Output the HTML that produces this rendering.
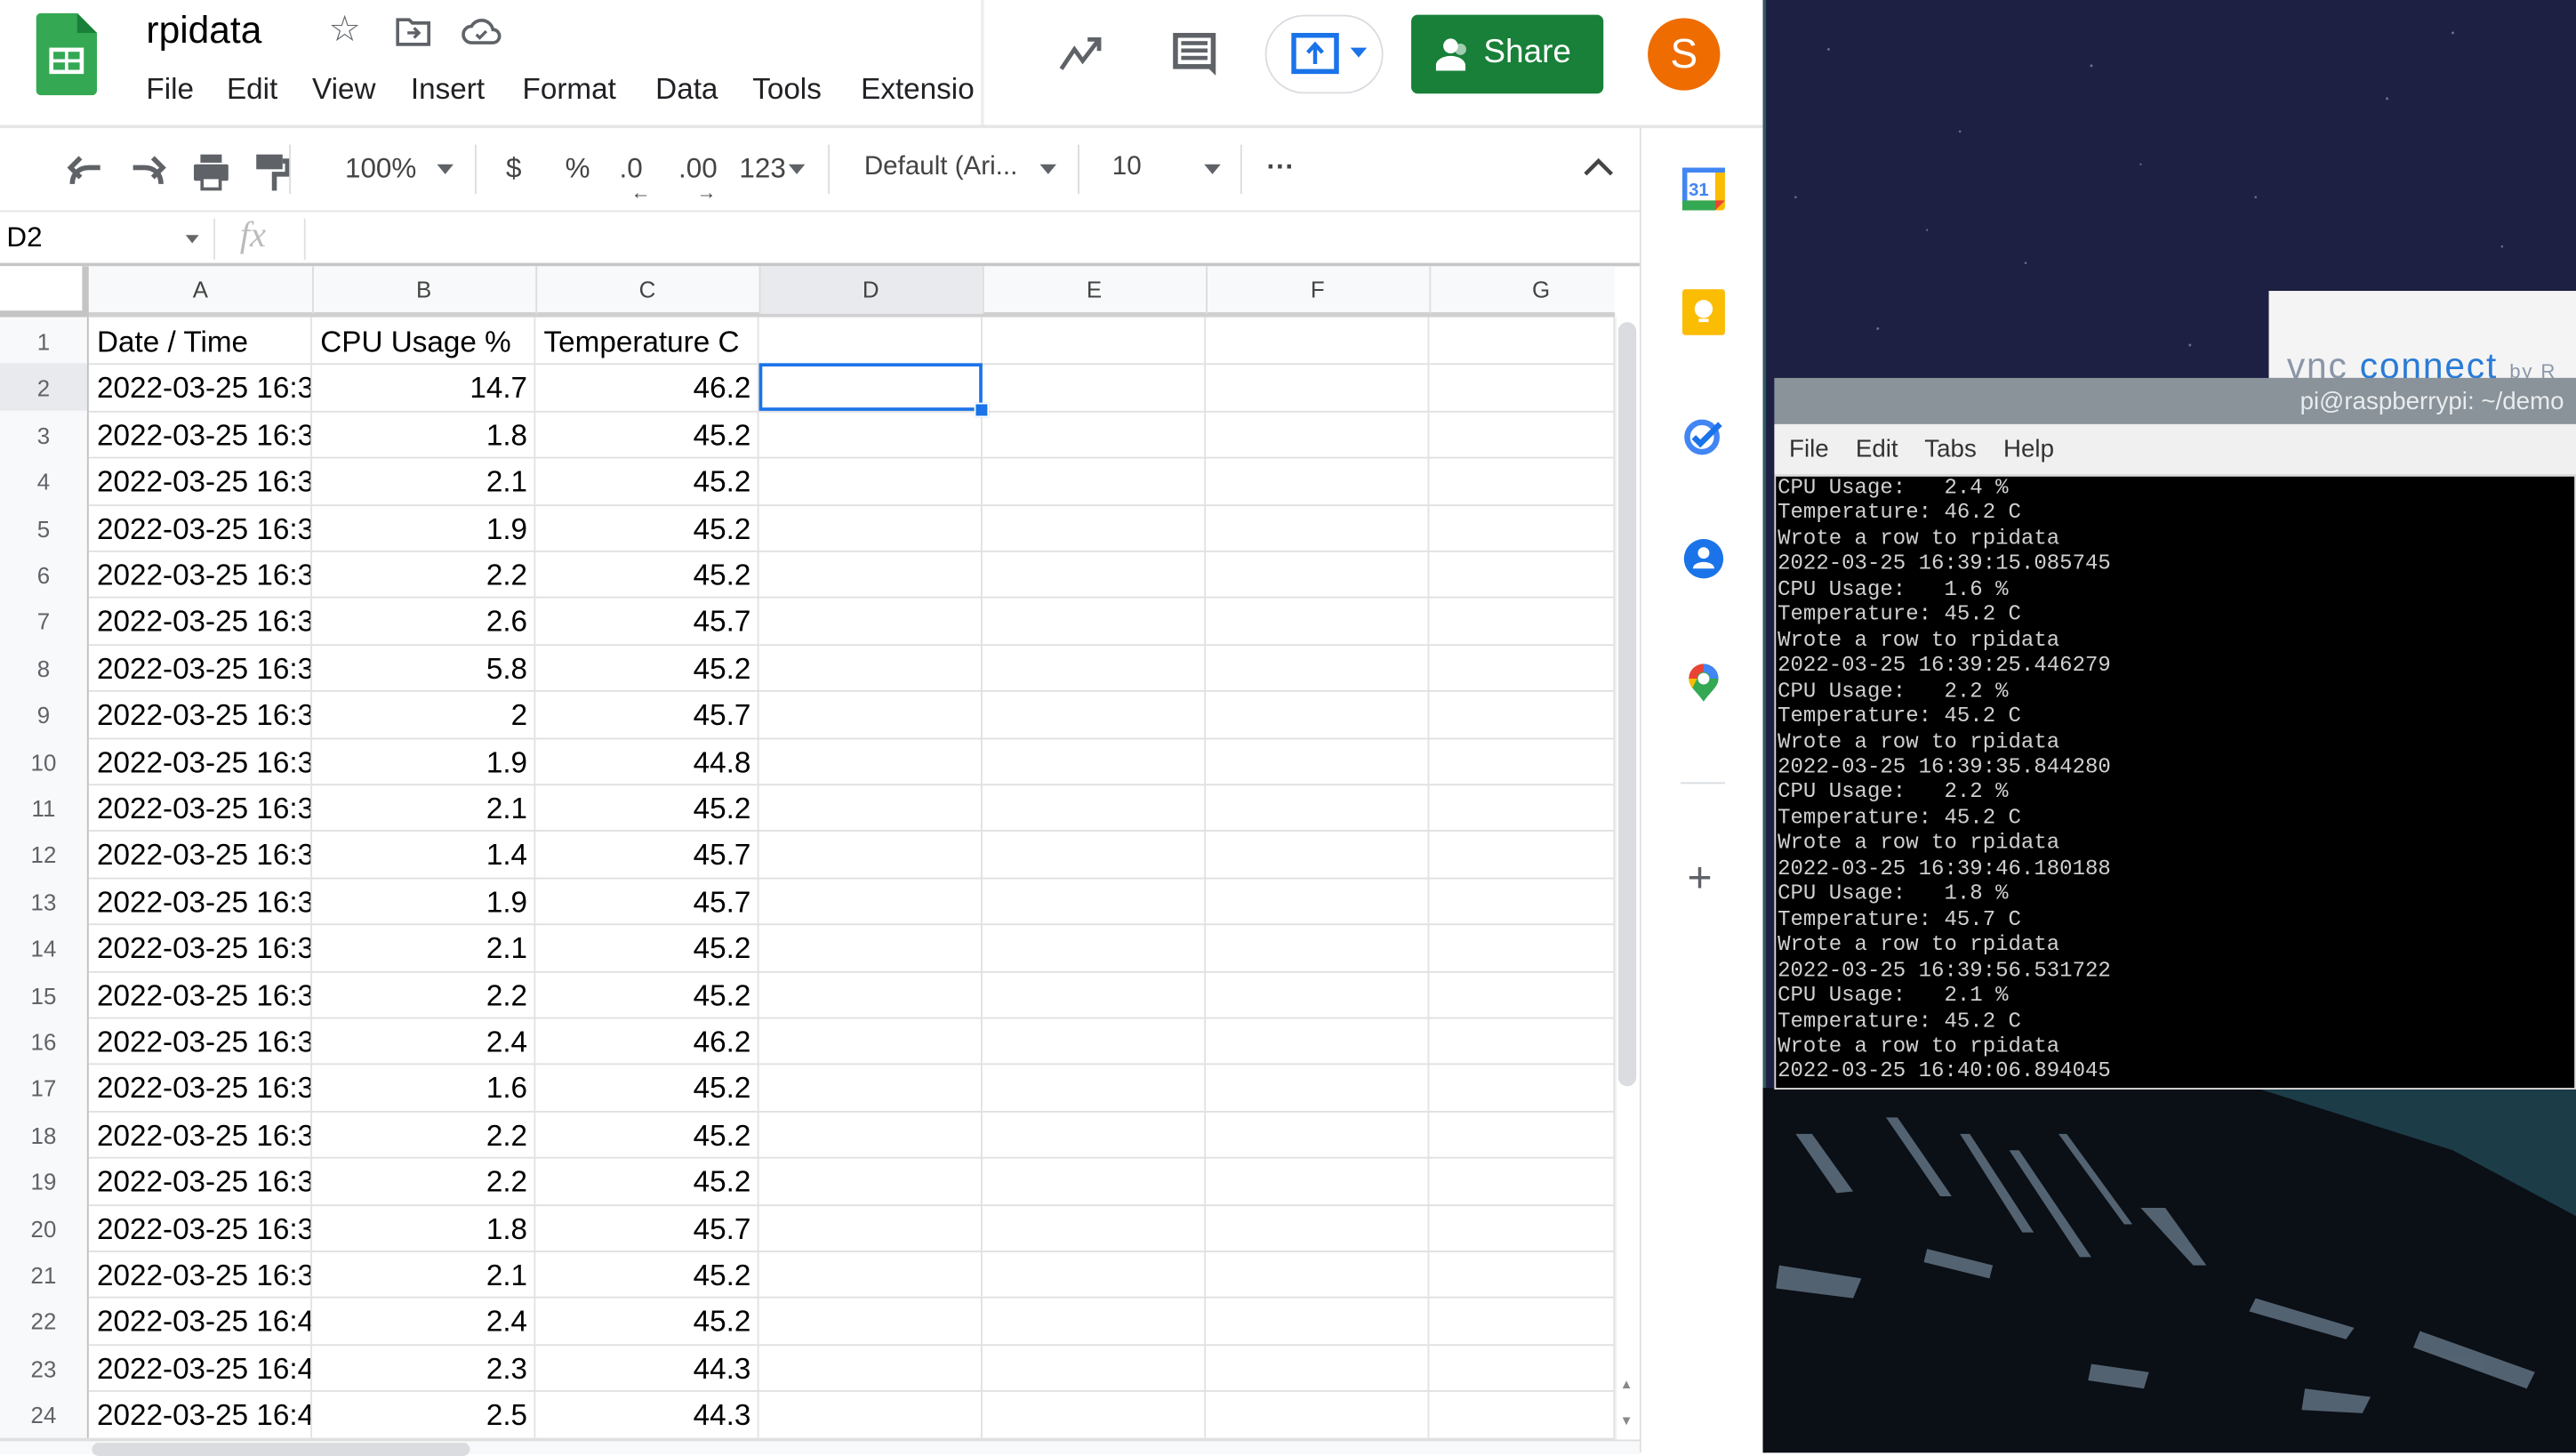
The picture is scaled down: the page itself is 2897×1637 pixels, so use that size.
<!DOCTYPE html>
<html><head><meta charset="utf-8">
<style>
html,body{margin:0;padding:0;width:2897px;height:1632px;overflow:hidden;background:#fff}
#s{position:absolute;left:0;top:0;width:1568px;height:884px;transform:scale(1.84758);transform-origin:0 0;font-family:"Liberation Sans",Arial,sans-serif;}
.a{position:absolute}
.mn{position:absolute;top:44px;font-size:18px;color:#202124;white-space:nowrap}
.row{position:absolute;left:0;width:983px;height:28.4px;border-bottom:1px solid #e0e0e0;font-size:18px;color:#000}
.row div{position:absolute;top:0;height:28.4px;line-height:30px;border-right:1px solid #e2e2e2;box-sizing:border-box;overflow:hidden;white-space:nowrap}
.rh{left:0;width:54px;background:#f8f9fa;color:#5f6368;font-size:14px;text-align:center;border-right:1px solid #c0c0c0!important}
.ca{left:54px;width:136px;padding-left:5px}
.cb{left:190px;width:136px;text-align:right;padding-right:4px}
.cc{left:326px;width:136px;text-align:right;padding-right:4px}
.cd{left:462px;width:136px}.ce{left:598px;width:136px}.cf{left:734px;width:136px}.cg{left:870px;width:113px}
.term{font-family:"Liberation Mono","DejaVu Sans Mono",monospace;font-size:13px;line-height:15.45px;color:#d0d0d0;white-space:pre}
.tb{color:#444;font-size:17px}
</style></head><body><div id="s">
<!-- desktop background -->
<div class="a" style="left:1073px;top:0;width:495px;height:884px;background:#1d2043"></div>
<div class="a" style="left:1073px;top:0;width:2px;height:884px;background:#2f5a5e"></div>
<svg class="a" style="left:1073px;top:0" width="495" height="884">
<g fill="#8a8fb8" opacity=".7">
<circle cx="40" cy="30" r=".8"/><circle cx="120" cy="80" r=".7"/><circle cx="200" cy="40" r=".8"/><circle cx="300" cy="120" r=".7"/><circle cx="380" cy="60" r=".8"/><circle cx="450" cy="150" r=".7"/><circle cx="70" cy="200" r=".8"/><circle cx="160" cy="160" r=".7"/><circle cx="260" cy="210" r=".8"/><circle cx="340" cy="180" r=".7"/><circle cx="20" cy="120" r=".7"/><circle cx="420" cy="20" r=".8"/><circle cx="230" cy="100" r=".6"/><circle cx="100" cy="140" r=".6"/>
</g>
<polygon points="0,662 495,662 495,884 0,884" fill="#0b0f16"/>
<polygon points="300,662 495,662 495,740 420,700" fill="#1c3c48"/>
<g fill="#8fa8bc" opacity=".55">
<polygon points="20,690 30,690 55,725 45,726"/><polygon points="75,680 82,680 115,728 108,728"/><polygon points="120,690 126,690 165,750 158,750"/><polygon points="150,700 156,700 200,765 193,765"/><polygon points="180,690 185,690 225,745 220,745"/><polygon points="10,770 60,778 55,790 8,784"/><polygon points="300,790 360,808 355,815 296,798"/><polygon points="330,845 370,850 365,860 328,858"/><polygon points="400,810 470,835 465,845 396,820"/><polygon points="200,830 235,835 232,845 198,840"/><polygon points="100,760 140,770 138,778 98,768"/><polygon points="230,735 245,735 270,770 262,770"/>
</g>
</svg>
<!-- VNC box -->
<div class="a" style="left:1381px;top:177px;width:187px;height:53px;background:#f4f4f4"></div>
<div class="a" style="left:1392px;top:210px;font-size:22px;color:#2a7bd6;white-space:nowrap;letter-spacing:1px"><span style="color:#8a96a8">vnc</span> connect <span style="font-size:12px;color:#8a96a8">by R</span></div>
<!-- terminal -->
<div class="a" style="left:1080px;top:230px;width:488px;height:28px;background:#8a9399"></div>
<div class="a" style="left:1400px;top:236px;font-size:15px;color:#e8ecef;white-space:nowrap">pi@raspberrypi: ~/demo</div>
<div class="a" style="left:1080px;top:258px;width:488px;height:31px;background:#f0f0f0"></div>
<div class="a" style="left:1089px;top:265px;font-size:15px;color:#333;word-spacing:4px">File&nbsp; Edit&nbsp; Tabs&nbsp; Help</div>
<div class="a" style="left:1080px;top:289px;width:488px;height:374px;background:#000;border:1px solid #ddd;box-sizing:border-box"></div>
<div class="a term" style="left:1082px;top:289px">CPU Usage:   2.4 %
Temperature: 46.2 C
Wrote a row to rpidata
2022-03-25 16:39:15.085745
CPU Usage:   1.6 %
Temperature: 45.2 C
Wrote a row to rpidata
2022-03-25 16:39:25.446279
CPU Usage:   2.2 %
Temperature: 45.2 C
Wrote a row to rpidata
2022-03-25 16:39:35.844280
CPU Usage:   2.2 %
Temperature: 45.2 C
Wrote a row to rpidata
2022-03-25 16:39:46.180188
CPU Usage:   1.8 %
Temperature: 45.7 C
Wrote a row to rpidata
2022-03-25 16:39:56.531722
CPU Usage:   2.1 %
Temperature: 45.2 C
Wrote a row to rpidata
2022-03-25 16:40:06.894045</div>

<!-- sheets window -->
<div class="a" style="left:0;top:0;width:1073px;height:884px;background:#fff"></div>
<!-- header -->
<svg class="a" style="left:22px;top:8px" width="38" height="50"><path d="M3 0h22l12 12v35a3 3 0 0 1-3 3H3a3 3 0 0 1-3-3V3a3 3 0 0 1 3-3z" fill="#34a853"/><path d="M25 0l12 12H25z" fill="#188038"/><rect x="8" y="21" width="21" height="16" fill="#fff"/><rect x="10.5" y="23.5" width="7" height="4.5" fill="#34a853"/><rect x="19.5" y="23.5" width="7" height="4.5" fill="#34a853"/><rect x="10.5" y="30" width="7" height="4.5" fill="#34a853"/><rect x="19.5" y="30" width="7" height="4.5" fill="#34a853"/></svg>
<div class="a" style="left:89px;top:5px;font-size:23px;color:#000">rpidata</div>
<div class="a" style="left:200px;top:5px;font-size:22px;color:#5f6368">☆</div>
<svg class="a" style="left:241px;top:9px" width="22" height="20"><path d="M1 3h7l2 2h10v13H1z" fill="none" stroke="#5f6368" stroke-width="2"/><path d="M7 11h7M11 8l3 3-3 3" fill="none" stroke="#5f6368" stroke-width="1.8"/></svg>
<svg class="a" style="left:281px;top:10px" width="24" height="18"><path d="M6 16a5 5 0 0 1 0-10 7 7 0 0 1 13 2 4 4 0 0 1 0 8z" fill="none" stroke="#5f6368" stroke-width="2"/><path d="M9 11l2 2 4-4" fill="none" stroke="#5f6368" stroke-width="1.8"/></svg>
<span class="mn" style="left:89px">File</span><span class="mn" style="left:138px">Edit</span><span class="mn" style="left:190px">View</span><span class="mn" style="left:250px">Insert</span><span class="mn" style="left:318px">Format</span><span class="mn" style="left:399px">Data</span><span class="mn" style="left:458px">Tools</span><span class="mn" style="left:524px">Extensio</span>
<div class="a" style="left:597px;top:0;width:2px;height:77px;background:#eee"></div>
<svg class="a" style="left:644px;top:20px" width="30" height="24"><path d="M2 22l8-12 5 7 10-13M18 4h7v7" fill="none" stroke="#5f6368" stroke-width="2.6"/></svg>
<svg class="a" style="left:712px;top:18px" width="30" height="30"><path d="M2 2h26v22H6l-0 0V24H2zM24 24l4 4V24" fill="#5f6368"/><rect x="5" y="5" width="20" height="16" fill="#fff"/><rect x="7" y="7" width="16" height="2.5" fill="#5f6368"/><rect x="7" y="11.5" width="16" height="2.5" fill="#5f6368"/><rect x="7" y="16" width="16" height="2.5" fill="#5f6368"/></svg>
<div class="a" style="left:770px;top:9px;width:72px;height:48px;border:1px solid #dadce0;border-radius:24px;box-sizing:border-box"></div>
<svg class="a" style="left:786px;top:20px" width="46" height="26"><rect x="1.5" y="1.5" width="26" height="22" fill="none" stroke="#1a73e8" stroke-width="3"/><path d="M14.5 19V8M10 12l4.5-5 4.5 5" fill="none" stroke="#1a73e8" stroke-width="2.4"/><path d="M36 9h10l-5 6z" fill="#1a73e8"/></svg>
<div class="a" style="left:859px;top:9px;width:117px;height:48px;background:#188038;border-radius:4px"></div>
<svg class="a" style="left:874px;top:23px" width="24" height="20"><circle cx="9" cy="5" r="4.5" fill="#fff"/><path d="M0 20v-3c0-4 5-6 9-6s9 2 9 6v3z" fill="#fff"/><circle cx="15" cy="7" r="3.5" fill="#fff" opacity=".6"/></svg>
<div class="a" style="left:903px;top:21px;font-size:20px;color:#fff">Share</div>
<div class="a" style="left:1003px;top:11px;width:44px;height:44px;border-radius:50%;background:#ef6c00;color:#fff;font-size:25px;text-align:center;line-height:44px">S</div>
<div class="a" style="left:0;top:76px;width:1073px;height:2px;background:#e6e6e6"></div>
<!-- toolbar -->
<div class="a" style="left:0;top:78px;width:998px;height:50px;background:#fff"></div>
<svg class="a" style="left:38px;top:90px" width="150" height="30">
<path d="M6 22c0-7 5-10 10-10h7M11 6l-6 6 6 6" fill="none" stroke="#5f6368" stroke-width="3"/>
<path d="M66 22c0-7-5-10-10-10h-7M61 6l6 6-6 6" fill="none" stroke="#5f6368" stroke-width="3" transform="translate(-6 0)"/>
<rect x="80" y="10" width="21" height="10" rx="1" fill="#5f6368"/><rect x="84" y="4" width="13" height="5" fill="#5f6368"/><rect x="84" y="18" width="13" height="8" fill="#5f6368"/><rect x="86" y="19" width="9" height="5" fill="#fff"/>
<rect x="118" y="4" width="16" height="9" fill="#5f6368"/><path d="M134 8h3v8h-8v10" fill="none" stroke="#5f6368" stroke-width="3"/>
</svg>
<div class="a" style="left:176px;top:88px;width:1px;height:30px;background:#dadce0"></div>
<div class="a tb" style="left:210px;top:93px">100%</div>
<div class="a" style="left:266px;top:100px;border-left:5px solid transparent;border-right:5px solid transparent;border-top:6px solid #5f6368"></div>
<div class="a" style="left:289px;top:88px;width:1px;height:30px;background:#dadce0"></div>
<div class="a tb" style="left:308px;top:93px">$</div>
<div class="a tb" style="left:344px;top:93px">%</div>
<div class="a tb" style="left:377px;top:93px">.0</div>
<div class="a" style="left:384px;top:110px;font-size:12px;color:#444">←</div>
<div class="a tb" style="left:413px;top:93px">.00</div>
<div class="a" style="left:424px;top:110px;font-size:12px;color:#444">→</div>
<div class="a tb" style="left:450px;top:93px">123</div>
<div class="a" style="left:480px;top:100px;border-left:5px solid transparent;border-right:5px solid transparent;border-top:6px solid #5f6368"></div>
<div class="a" style="left:504px;top:88px;width:1px;height:30px;background:#dadce0"></div>
<div class="a tb" style="left:526px;top:93px;font-size:16px">Default (Ari...</div>
<div class="a" style="left:633px;top:100px;border-left:5px solid transparent;border-right:5px solid transparent;border-top:6px solid #5f6368"></div>
<div class="a" style="left:656px;top:88px;width:1px;height:30px;background:#dadce0"></div>
<div class="a tb" style="left:677px;top:93px;font-size:16px">10</div>
<div class="a" style="left:733px;top:100px;border-left:5px solid transparent;border-right:5px solid transparent;border-top:6px solid #5f6368"></div>
<div class="a" style="left:755px;top:88px;width:1px;height:30px;background:#dadce0"></div>
<div class="a tb" style="left:771px;top:92px;font-weight:bold">···</div>
<svg class="a" style="left:963px;top:95px" width="20" height="14"><path d="M2 11l8-8 8 8" fill="none" stroke="#444" stroke-width="2.4"/></svg>
<div class="a" style="left:0;top:128px;width:998px;height:1px;background:#e3e3e3"></div>
<!-- formula bar -->
<div class="a" style="left:4px;top:135px;font-size:17px;color:#000">D2</div>
<div class="a" style="left:113px;top:143px;border-left:4px solid transparent;border-right:4px solid transparent;border-top:5px solid #666"></div>
<div class="a" style="left:130px;top:133px;width:1px;height:25px;background:#e0e0e0"></div>
<div class="a" style="left:146px;top:130px;font-family:'Liberation Serif',serif;font-style:italic;font-size:22px;color:#bbb">fx</div>
<div class="a" style="left:185px;top:133px;width:1px;height:25px;background:#e0e0e0"></div>
<div class="a" style="left:0;top:160px;width:998px;height:2px;background:#c6c6c6"></div>
<!-- column headers -->
<div class="a" style="left:0;top:162px;width:983px;height:31px;background:#f8f9fa;border-bottom:3px solid #d0d0d0;box-sizing:border-box"></div>
<div class="a" style="left:462px;top:162px;width:136px;height:29px;background:#e8eaed"></div>
<div class="a" style="left:0;top:162px;width:54px;height:31px;background:#fff;border-right:4px solid #c4c4c4;border-bottom:4px solid #c4c4c4;box-sizing:border-box"></div>
<div class="a" style="left:54px;top:162px;width:929px;height:29px;font-size:14px;color:#444;line-height:29px">
<span class="a" style="left:0;width:136px;text-align:center;border-right:1px solid #ddd;height:29px">A</span>
<span class="a" style="left:136px;width:136px;text-align:center;border-right:1px solid #ddd;height:29px">B</span>
<span class="a" style="left:272px;width:136px;text-align:center;border-right:1px solid #ddd;height:29px">C</span>
<span class="a" style="left:408px;width:136px;text-align:center;border-right:1px solid #ddd;height:29px">D</span>
<span class="a" style="left:544px;width:136px;text-align:center;border-right:1px solid #ddd;height:29px">E</span>
<span class="a" style="left:680px;width:136px;text-align:center;border-right:1px solid #ddd;height:29px">F</span>
<span class="a" style="left:816px;width:136px;text-align:center;height:29px">G</span>
</div>
<!-- rows -->
<div class="row" style="top:193px"><div class="rh">1</div><div class="ca">Date / Time</div><div class="cb" style="text-align:left;padding-left:5px">CPU Usage %</div><div class="cc" style="text-align:left;padding-left:5px">Temperature C</div><div class="cd"></div><div class="ce"></div><div class="cf"></div><div class="cg"></div></div>
<div class="row" style="top:221.4px"><div class="rh" style="background:#e8eaed">2</div><div class="ca">2022-03-25 16:3</div><div class="cb">14.7</div><div class="cc">46.2</div><div class="cd"></div><div class="ce"></div><div class="cf"></div><div class="cg"></div></div>
<div class="row" style="top:249.8px"><div class="rh">3</div><div class="ca">2022-03-25 16:3</div><div class="cb">1.8</div><div class="cc">45.2</div><div class="cd"></div><div class="ce"></div><div class="cf"></div><div class="cg"></div></div>
<div class="row" style="top:278.2px"><div class="rh">4</div><div class="ca">2022-03-25 16:3</div><div class="cb">2.1</div><div class="cc">45.2</div><div class="cd"></div><div class="ce"></div><div class="cf"></div><div class="cg"></div></div>
<div class="row" style="top:306.6px"><div class="rh">5</div><div class="ca">2022-03-25 16:3</div><div class="cb">1.9</div><div class="cc">45.2</div><div class="cd"></div><div class="ce"></div><div class="cf"></div><div class="cg"></div></div>
<div class="row" style="top:335px"><div class="rh">6</div><div class="ca">2022-03-25 16:3</div><div class="cb">2.2</div><div class="cc">45.2</div><div class="cd"></div><div class="ce"></div><div class="cf"></div><div class="cg"></div></div>
<div class="row" style="top:363.4px"><div class="rh">7</div><div class="ca">2022-03-25 16:3</div><div class="cb">2.6</div><div class="cc">45.7</div><div class="cd"></div><div class="ce"></div><div class="cf"></div><div class="cg"></div></div>
<div class="row" style="top:391.8px"><div class="rh">8</div><div class="ca">2022-03-25 16:3</div><div class="cb">5.8</div><div class="cc">45.2</div><div class="cd"></div><div class="ce"></div><div class="cf"></div><div class="cg"></div></div>
<div class="row" style="top:420.2px"><div class="rh">9</div><div class="ca">2022-03-25 16:3</div><div class="cb">2</div><div class="cc">45.7</div><div class="cd"></div><div class="ce"></div><div class="cf"></div><div class="cg"></div></div>
<div class="row" style="top:448.6px"><div class="rh">10</div><div class="ca">2022-03-25 16:3</div><div class="cb">1.9</div><div class="cc">44.8</div><div class="cd"></div><div class="ce"></div><div class="cf"></div><div class="cg"></div></div>
<div class="row" style="top:477px"><div class="rh">11</div><div class="ca">2022-03-25 16:3</div><div class="cb">2.1</div><div class="cc">45.2</div><div class="cd"></div><div class="ce"></div><div class="cf"></div><div class="cg"></div></div>
<div class="row" style="top:505.4px"><div class="rh">12</div><div class="ca">2022-03-25 16:3</div><div class="cb">1.4</div><div class="cc">45.7</div><div class="cd"></div><div class="ce"></div><div class="cf"></div><div class="cg"></div></div>
<div class="row" style="top:533.8px"><div class="rh">13</div><div class="ca">2022-03-25 16:3</div><div class="cb">1.9</div><div class="cc">45.7</div><div class="cd"></div><div class="ce"></div><div class="cf"></div><div class="cg"></div></div>
<div class="row" style="top:562.2px"><div class="rh">14</div><div class="ca">2022-03-25 16:3</div><div class="cb">2.1</div><div class="cc">45.2</div><div class="cd"></div><div class="ce"></div><div class="cf"></div><div class="cg"></div></div>
<div class="row" style="top:590.6px"><div class="rh">15</div><div class="ca">2022-03-25 16:3</div><div class="cb">2.2</div><div class="cc">45.2</div><div class="cd"></div><div class="ce"></div><div class="cf"></div><div class="cg"></div></div>
<div class="row" style="top:619px"><div class="rh">16</div><div class="ca">2022-03-25 16:3</div><div class="cb">2.4</div><div class="cc">46.2</div><div class="cd"></div><div class="ce"></div><div class="cf"></div><div class="cg"></div></div>
<div class="row" style="top:647.4px"><div class="rh">17</div><div class="ca">2022-03-25 16:3</div><div class="cb">1.6</div><div class="cc">45.2</div><div class="cd"></div><div class="ce"></div><div class="cf"></div><div class="cg"></div></div>
<div class="row" style="top:675.8px"><div class="rh">18</div><div class="ca">2022-03-25 16:3</div><div class="cb">2.2</div><div class="cc">45.2</div><div class="cd"></div><div class="ce"></div><div class="cf"></div><div class="cg"></div></div>
<div class="row" style="top:704.2px"><div class="rh">19</div><div class="ca">2022-03-25 16:3</div><div class="cb">2.2</div><div class="cc">45.2</div><div class="cd"></div><div class="ce"></div><div class="cf"></div><div class="cg"></div></div>
<div class="row" style="top:732.6px"><div class="rh">20</div><div class="ca">2022-03-25 16:3</div><div class="cb">1.8</div><div class="cc">45.7</div><div class="cd"></div><div class="ce"></div><div class="cf"></div><div class="cg"></div></div>
<div class="row" style="top:761px"><div class="rh">21</div><div class="ca">2022-03-25 16:3</div><div class="cb">2.1</div><div class="cc">45.2</div><div class="cd"></div><div class="ce"></div><div class="cf"></div><div class="cg"></div></div>
<div class="row" style="top:789.4px"><div class="rh">22</div><div class="ca">2022-03-25 16:4</div><div class="cb">2.4</div><div class="cc">45.2</div><div class="cd"></div><div class="ce"></div><div class="cf"></div><div class="cg"></div></div>
<div class="row" style="top:817.8px"><div class="rh">23</div><div class="ca">2022-03-25 16:4</div><div class="cb">2.3</div><div class="cc">44.3</div><div class="cd"></div><div class="ce"></div><div class="cf"></div><div class="cg"></div></div>
<div class="row" style="top:846.2px"><div class="rh">24</div><div class="ca">2022-03-25 16:4</div><div class="cb">2.5</div><div class="cc">44.3</div><div class="cd"></div><div class="ce"></div><div class="cf"></div><div class="cg"></div></div>
<!-- selection -->
<div class="a" style="left:462px;top:221px;width:136px;height:29px;border:2px solid #1a73e8;box-sizing:border-box"></div>
<div class="a" style="left:593px;top:245px;width:7px;height:7px;background:#1a73e8;border:1px solid #fff"></div>
<!-- bottom scroll -->
<div class="a" style="left:0;top:876px;width:998px;height:8px;background:#f8f9fa;border-top:1px solid #ddd"></div>
<div class="a" style="left:56px;top:878px;width:230px;height:8px;background:#dadce0;border-radius:4px"></div>
<!-- vertical scrollbar -->
<div class="a" style="left:983px;top:193px;width:15px;height:683px;background:#fff;border-left:1px solid #eee"></div>
<div class="a" style="left:985px;top:196px;width:11px;height:465px;background:#dadce0;border-radius:6px"></div>
<div class="a" style="left:986px;top:838px;font-size:8px;color:#888">▲</div>
<div class="a" style="left:986px;top:860px;font-size:8px;color:#888">▼</div>
<!-- side panel -->
<div class="a" style="left:998px;top:78px;width:1px;height:806px;background:#e0e0e0"></div>
<svg class="a" style="left:1024px;top:102px" width="26" height="26"><rect x="0" y="0" width="26" height="26" rx="2" fill="#fbbc04"/><rect x="0" y="0" width="20" height="20" fill="#fff"/><rect x="0" y="0" width="26" height="3" fill="#4285f4"/><rect x="0" y="0" width="3" height="22" fill="#4285f4"/><rect x="0" y="20" width="20" height="6" fill="#34a853"/><path d="M20 20h6l-6 6z" fill="#ea4335"/><text x="10" y="17" font-size="11" font-family="Liberation Sans" font-weight="bold" fill="#4285f4" text-anchor="middle">31</text></svg>
<svg class="a" style="left:1024px;top:176px" width="26" height="28"><rect x="0" y="0" width="26" height="28" rx="2" fill="#fbbc04"/><circle cx="13" cy="12" r="5.5" fill="#fff"/><rect x="10" y="18" width="6" height="2" fill="#fff"/></svg>
<svg class="a" style="left:1024px;top:253px" width="26" height="24"><circle cx="12" cy="13" r="9" fill="none" stroke="#4285f4" stroke-width="3.5"/><path d="M7 13l4 4 12-12" fill="none" stroke="#1a73e8" stroke-width="3.5"/></svg>
<svg class="a" style="left:1024px;top:327px" width="26" height="26"><circle cx="13" cy="13" r="12" fill="#1a73e8"/><circle cx="13" cy="9.5" r="3.5" fill="#fff"/><path d="M6.5 19c0-3 4-4 6.5-4s6.5 1 6.5 4z" fill="#fff"/></svg>
<svg class="a" style="left:1027px;top:404px" width="20" height="24"><path d="M10 23C6 17 1 14 1 9a9 9 0 0 1 18 0c0 5-5 8-9 14z" fill="#34a853"/><path d="M1 9a9 9 0 0 1 9-9v5a4 4 0 0 0-4 4z" fill="#ea4335"/><path d="M10 0a9 9 0 0 1 9 9h-5a4 4 0 0 0-4-4z" fill="#4285f4"/><path d="M1 9h5l-3 6C2 13 1 11 1 9z" fill="#fbbc04"/><circle cx="10" cy="9" r="3.5" fill="#fff"/></svg>
<div class="a" style="left:1023px;top:476px;width:27px;height:1px;background:#dadce0"></div>
<div class="a" style="left:1027px;top:519px;font-size:26px;color:#5f6368;line-height:30px">+</div>
</div></body></html>
